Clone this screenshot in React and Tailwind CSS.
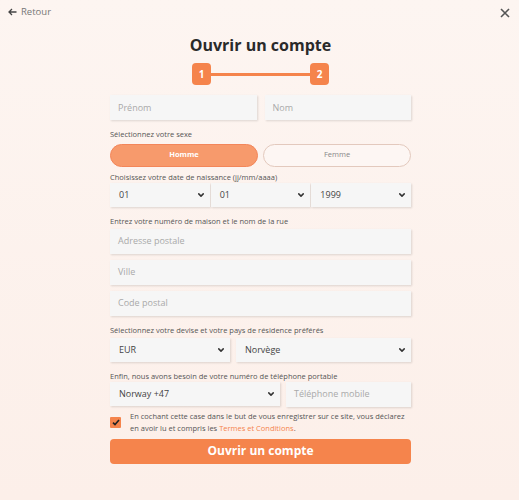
import React from "react";

const F = { fontFamily: '"Open Sans", "Liberation Sans", sans-serif' };

const Chevron = () => (
  <svg width="6" height="4" viewBox="0 0 8 5" className="shrink-0">
    <path d="M1 1l3 3 3-3" stroke="#333" strokeWidth="2" fill="none" strokeLinecap="round" strokeLinejoin="round" />
  </svg>
);

const Input = ({ ph, className = "" }) => (
  <div className={"h-[25px] bg-[#f6f6f6] shadow-[1px_1px_2px_rgba(0,0,0,0.13)] flex items-center pl-[8px] text-[9px] text-[#a9a9a9] " + className}>
    {ph}
  </div>
);

const Select = ({ v, className = "", pl = "pl-[9px]" }) => (
  <div className={"h-[24px] bg-[#f6f6f6] shadow-[1px_1px_2px_rgba(0,0,0,0.13)] flex items-center justify-between pr-[6px] text-[9px] text-[#444] " + pl + " " + className}>
    <span>{v}</span>
    <Chevron />
  </div>
);

const Label = ({ children, className = "" }) => (
  <div className={"text-[7.5px] text-[#555] leading-none " + className}>{children}</div>
);

export default function App() {
  return (
    <div style={F} className="w-[519px] h-[500px] bg-gradient-to-b from-[#fdf5f1] to-[#fcefe9] relative overflow-hidden">
      <div className="flex items-center justify-between px-[8px] pt-[6px] h-[18px]">
        <div className="flex items-center gap-[4px] text-[9.5px] text-[#777]">
          <svg width="9" height="8" viewBox="0 0 9 8">
            <path d="M8.5 4H1.2M4 1L1 4l3 3" stroke="#444" strokeWidth="1.3" fill="none" />
          </svg>
          <span>Retour</span>
        </div>
        <svg width="10" height="10" viewBox="0 0 10 10" className="mr-[1px] mt-[1px]">
          <path d="M1 1l8 8M9 1L1 9" stroke="#555" strokeWidth="1.6" />
        </svg>
      </div>

      <div className="w-[301px] ml-[110px]">
        <div className="text-center text-[16px] font-bold text-[#2a2a2a] mt-[19px] leading-none">Ouvrir un compte</div>

        <div className="flex items-center justify-center mt-[10px] h-[22px]">
          <div className="w-[19px] h-[22px] rounded-[4px] bg-[#f5844c] text-white text-[10px] font-bold flex items-center justify-center">1</div>
          <div className="w-[99px] h-[3px] bg-[#f5844c]" />
          <div className="w-[19px] h-[22px] rounded-[4px] bg-[#f5844c] text-white text-[10px] font-bold flex items-center justify-center">2</div>
        </div>

        <div className="flex gap-[8px] mt-[10px]">
          <Input ph="Prénom" className="flex-1" />
          <Input ph="Nom" className="flex-1" />
        </div>

        <Label className="mt-[11px]">Sélectionnez votre sexe</Label>
        <div className="flex gap-[5px] mt-[5px]">
          <div className="flex-1 h-[23px] rounded-full bg-[#f79a6c] border border-[#f3865a] text-white text-[7.5px] font-bold flex items-center justify-center">Homme</div>
          <div className="flex-1 h-[23px] rounded-full border border-[#e3c9bd] bg-[#fdf6f3] text-[#888] text-[7.5px] flex items-center justify-center">Femme</div>
        </div>

        <Label className="mt-[7px]">Choisissez votre date de naissance (jj/mm/aaaa)</Label>
        <div className="flex gap-[1px] mt-[2px]">
          <Select v="01" className="flex-1" />
          <Select v="01" className="flex-1" />
          <Select v="1999" className="flex-1" />
        </div>

        <Label className="mt-[11px]">Entrez votre numéro de maison et le nom de la rue</Label>
        <div className="flex flex-col gap-[6px] mt-[3px]">
          <Input ph="Adresse postale" />
          <Input ph="Ville" />
          <Input ph="Code postal" />
        </div>

        <Label className="mt-[11px]">Sélectionnez votre devise et votre pays de résidence préférés</Label>
        <div className="flex gap-[6px] mt-[4px]">
          <Select v="EUR" className="w-[120px]" />
          <Select v="Norvège" className="flex-1" />
        </div>

        <Label className="mt-[11px]">Enfin, nous avons besoin de votre numéro de téléphone portable</Label>
        <div className="flex gap-[6px] mt-[1px]">
          <Select v="Norway +47" className="w-[170px] h-[23px]" />
          <Input ph="Téléphone mobile" className="flex-1 h-[23px]" />
        </div>

        <div className="flex gap-[9px] mt-[3px]">
          <div className="w-[11px] h-[11px] mt-[7px] bg-[#f5844c] rounded-[1px] flex items-center justify-center shrink-0">
            <svg width="8" height="7" viewBox="0 0 8 7">
              <path d="M1 3.6l2 2L7 1" stroke="#222" strokeWidth="1.6" fill="none" />
            </svg>
          </div>
          <div className="text-[7.5px] leading-[12px] text-[#555]">
            <div>En cochant cette case dans le but de vous enregistrer sur ce site, vous déclarez</div>
            <div>en avoir lu et compris les <span className="text-[#f5844c]">Termes et Conditions</span>.</div>
          </div>
        </div>

        <div className="mt-[5px] h-[25px] rounded-[4px] bg-[#f5844c] text-white text-[12px] font-bold flex items-center justify-center">Ouvrir un compte</div>
      </div>
    </div>
  );
}
